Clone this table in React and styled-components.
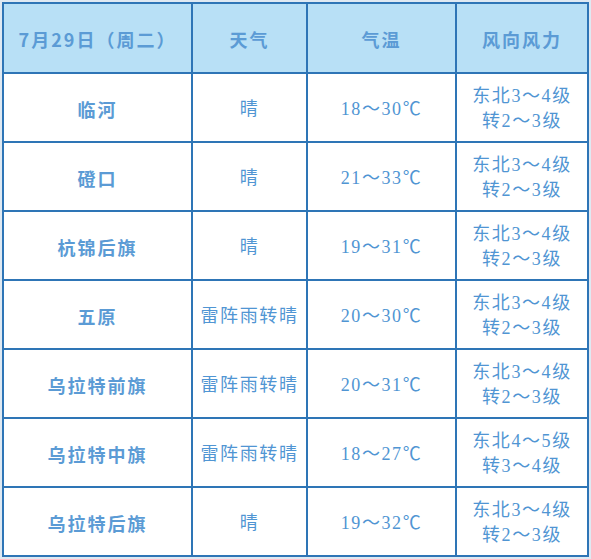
import { Fragment } from 'react'
import styled, { createGlobalStyle } from 'styled-components'

const GlobalStyle = createGlobalStyle`
    html, body {
        margin: 0;
        padding: 0;
        background: #dfe9f2;
    }
    body {
        padding: 2px;
    }
`

const Grid = styled.div`
    display: grid;
    grid-template-columns: 187px 113px 147px 130px;
    grid-template-rows: 68px repeat(7, 67px);
    gap: 2px;
    padding: 2px;
    width: max-content;
    background: #2e75b6;
`

const Cell = styled.div`
    display: flex;
    flex-direction: column;
    align-items: center;
    justify-content: center;
    padding-top: 3px;
    box-sizing: border-box;
    background: ${(props) => (props.$head ? '#b8e0f6' : '#ffffff')};
    color: ${(props) => (props.$bold ? '#5b9bd5' : '#5095d3')};
    font-size: 18px;
    line-height: 25px;
    letter-spacing: ${(props) => (props.$bold ? '2px' : '1.6px')};
    font-family: ${(props) =>
        props.$bold
            ? '"Noto Sans CJK SC", sans-serif'
            : '"Liberation Serif", "Noto Sans CJK SC", serif'};
    font-weight: ${(props) => (props.$bold ? 700 : 400)};
    white-space: nowrap;
`

const headers = ['7月29日（周二）', '天气', '气温', '风向风力']

const rows = [
    ['临河', '晴', '18～30℃', '东北3～4级', '转2～3级'],
    ['磴口', '晴', '21～33℃', '东北3～4级', '转2～3级'],
    ['杭锦后旗', '晴', '19～31℃', '东北3～4级', '转2～3级'],
    ['五原', '雷阵雨转晴', '20～30℃', '东北3～4级', '转2～3级'],
    ['乌拉特前旗', '雷阵雨转晴', '20～31℃', '东北3～4级', '转2～3级'],
    ['乌拉特中旗', '雷阵雨转晴', '18～27℃', '东北4～5级', '转3～4级'],
    ['乌拉特后旗', '晴', '19～32℃', '东北3～4级', '转2～3级'],
]

const App = () => {
    return <>
        <GlobalStyle />
        <Grid>
            {headers.map((h) => (
                <Cell key={h} $head $bold>{h}</Cell>
            ))}
            {rows.map(([place, weather, temp, wind1, wind2]) => (
                <Fragment key={place}>
                    <Cell $bold>{place}</Cell>
                    <Cell>{weather}</Cell>
                    <Cell>{temp}</Cell>
                    <Cell>
                        <span>{wind1}</span>
                        <span>{wind2}</span>
                    </Cell>
                </Fragment>
            ))}
        </Grid>
    </>
}

export default App
